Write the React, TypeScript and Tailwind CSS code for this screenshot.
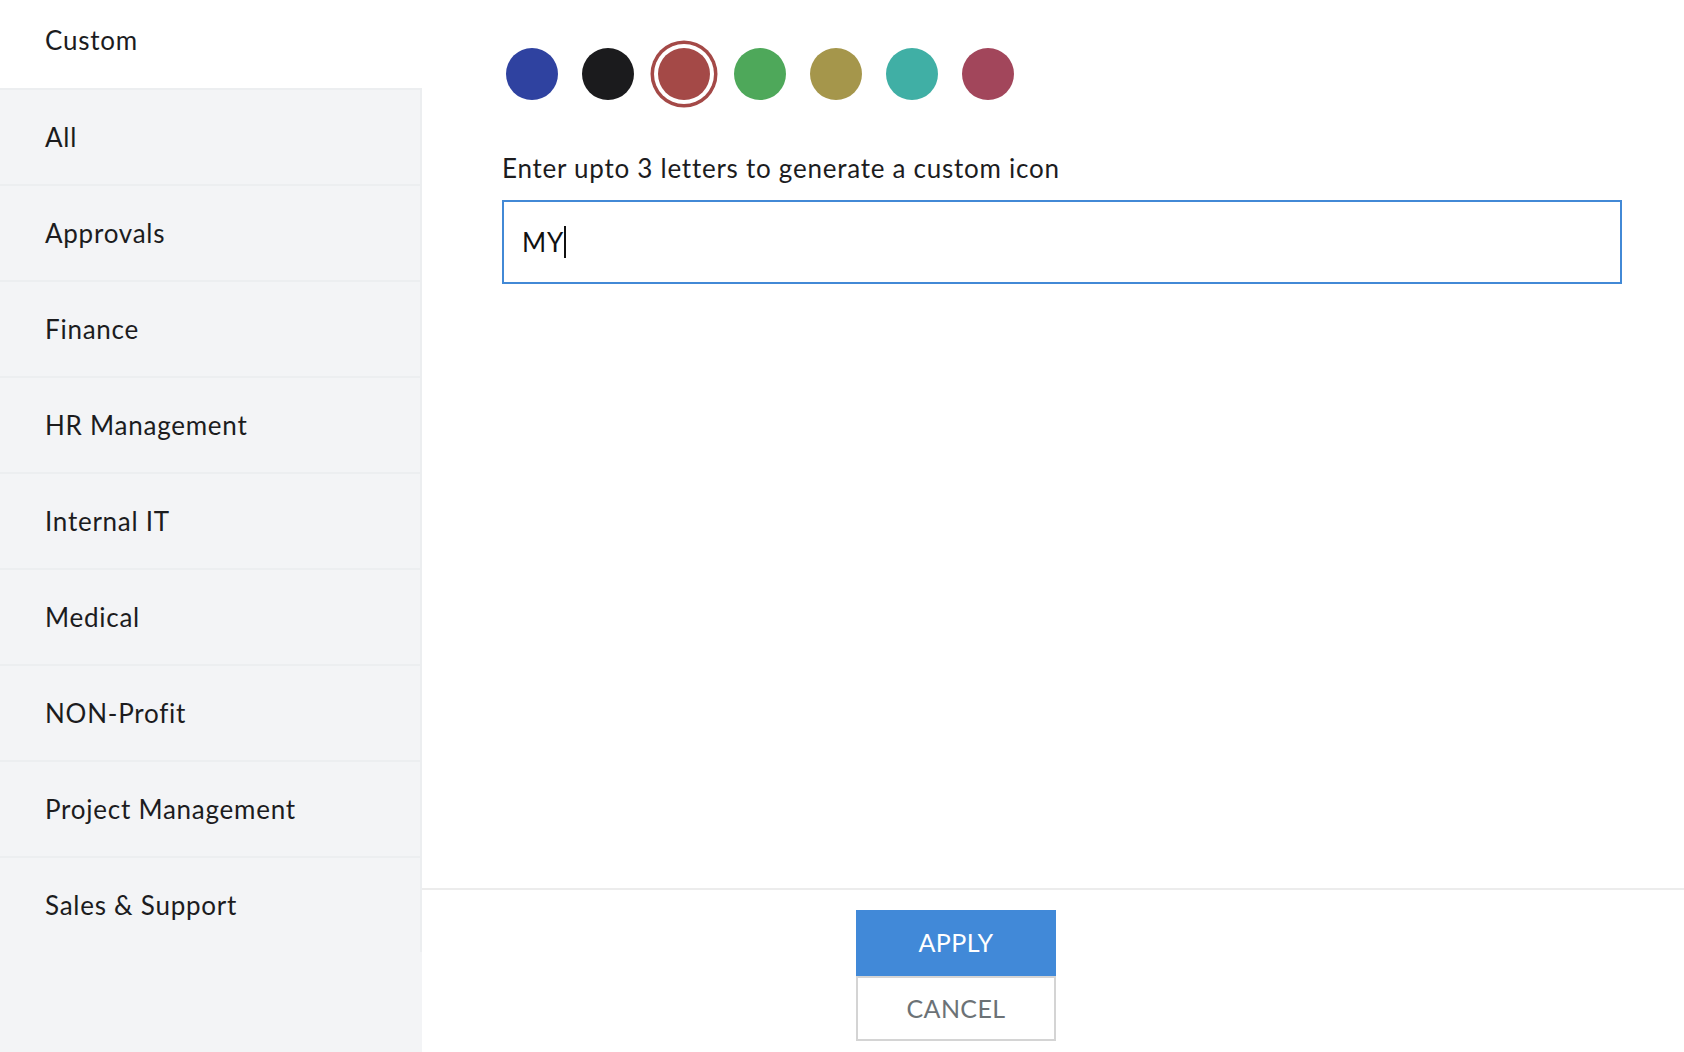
import React from 'react';

// Custom icon picker: category sidebar + colour swatches + letters input

const categories = [
  'All',
  'Approvals',
  'Finance',
  'HR Management',
  'Internal IT',
  'Medical',
  'NON-Profit',
  'Project Management',
  'Sales & Support',
];

const swatches = [
  { color: 'bg-[#2f42a0]', selected: false },
  { color: 'bg-[#1b1b1d]', selected: false },
  { color: 'bg-[#a44947]', selected: true },
  { color: 'bg-[#4ea85a]', selected: false },
  { color: 'bg-[#a5964b]', selected: false },
  { color: 'bg-[#40afa5]', selected: false },
  { color: 'bg-[#a2465b]', selected: false },
];

const App: React.FC = () => {
  return (
    <div className="flex h-[1052px] w-[1684px] overflow-hidden bg-white font-['Lato',sans-serif] text-[#1c1c1e] tracking-[0.75px]">
      {/* Sidebar */}
      <aside className="flex w-[422px] shrink-0 flex-col bg-[#f3f4f6]">
        <div className="flex h-[88px] items-center bg-white pb-[8px] pl-[45px] text-[26px]">Custom</div>
        {categories.map((c) => (
          <div
            key={c}
            className="flex h-[96px] items-center border-t-2 border-r-2 border-[#eceef0] pl-[45px] text-[26px]"
          >
            {c}
          </div>
        ))}
      </aside>

      {/* Main */}
      <main className="flex flex-1 flex-col">
        <div className="h-[888px] pt-[48px] pl-[80px] pr-[62px]">
          <div className="ml-[4px] flex gap-[24px]">
            {swatches.map((s, i) => (
              <div
                key={i}
                className={`h-[52px] w-[52px] rounded-full ${s.color} ${
                  s.selected ? 'shadow-[0_0_0_4px_#ffffff,0_0_0_7.5px_#a44947]' : ''
                }`}
              ></div>
            ))}
          </div>

          <div className="mt-[52px] text-[26px] leading-[32px]">Enter upto 3 letters to generate a custom icon</div>

          <div className="mt-[16px] flex h-[84px] items-center border-2 border-[#4289d6] px-[18px] text-[26px]">
            <span className="text-[#111]">MY</span>
            <span className="h-[32px] w-[2px] bg-[#111]"></span>
          </div>
        </div>

        {/* Footer */}
        <div className="flex-1 border-t-2 border-[#ececec] pt-[20px] pl-[434px]">
          <div className="flex w-[200px] flex-col tracking-[0.4px]">
            <button className="h-[66px] bg-[#4189d8] text-[25px] text-white">APPLY</button>
            <button className="h-[65px] border-2 border-[#d4d4d4] bg-white text-[25px] text-[#6c7276]">CANCEL</button>
          </div>
        </div>
      </main>
    </div>
  );
};

export default App;
